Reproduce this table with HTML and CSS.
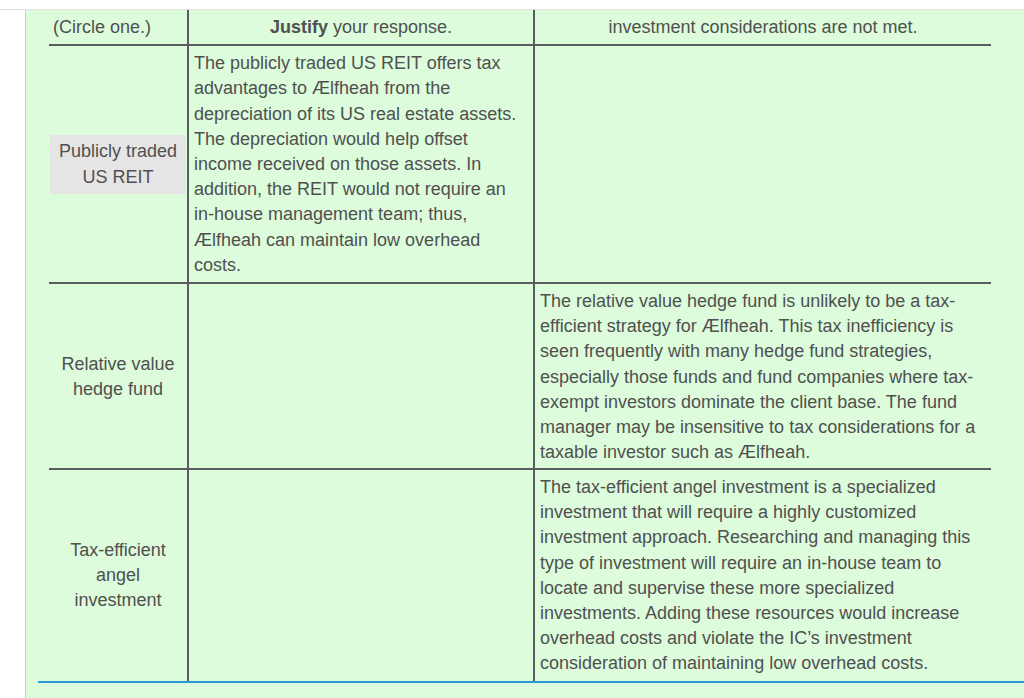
FILE: index.html
```html
<!DOCTYPE html>
<html lang="en">
<head>
<meta charset="utf-8">
<title>Investment selection</title>
<link rel="stylesheet" href="styles.css">
</head>
<body>
<div class="topbar"></div>
<div class="viewport">
  <div class="panel">
    <div class="section">
      <table class="grid">
        <colgroup>
          <col class="c1">
          <col class="c2">
          <col class="c3">
        </colgroup>
        <thead>
          <tr>
            <th class="col-a">(Circle one.)</th>
            <th class="col-b"><strong>Justify</strong> your response.</th>
            <th class="col-c">investment considerations are not met.</th>
          </tr>
        </thead>
        <tbody>
          <tr class="row-1">
            <td class="col-a"><div class="chosen">Publicly traded<br>US REIT</div></td>
            <td class="col-b">The publicly traded US REIT offers tax advantages to Ælfheah from the depreciation of its US real estate assets. The depreciation would help offset income received on those assets. In addition, the REIT would not require an in-house management team; thus, Ælfheah can maintain low overhead costs.</td>
            <td class="col-c"></td>
          </tr>
          <tr class="row-2">
            <td class="col-a">Relative value<br>hedge fund</td>
            <td class="col-b"></td>
            <td class="col-c">The relative value hedge fund is unlikely to be a tax-efficient strategy for Ælfheah. This tax inefficiency is seen frequently with many hedge fund strategies, especially those funds and fund companies where tax-exempt investors dominate the client base. The fund manager may be insensitive to tax considerations for a taxable investor such as Ælfheah.</td>
          </tr>
          <tr class="row-3">
            <td class="col-a">Tax-efficient<br>angel<br>investment</td>
            <td class="col-b"></td>
            <td class="col-c">The tax-efficient angel investment is a specialized investment that will require a highly customized investment approach. Researching and managing this type of investment will require an in-house team to locate and supervise these more specialized investments. Adding these resources would increase overhead costs and violate the IC’s investment consideration of maintaining low overhead costs.</td>
          </tr>
        </tbody>
      </table>
    </div>
  </div>
</div>
</body>
</html>
```

FILE: styles.css
```css
html, body {
  margin: 0;
  padding: 0;
  background: #ffffff;
}

body {
  font-family: "Liberation Sans", Arial, sans-serif;
  font-size: 18px;
  line-height: 25.2px;
  color: #505050;
}

.topbar {
  height: 9px;
  border-bottom: 1px solid #e2e2e2;
  background: #ffffff;
}

.viewport {
  height: 688px;
  overflow: hidden;
}

.panel {
  margin-left: 25px;
  width: 987px;
  border-left: 1px solid #a3e0c6;
  border-right: 1px solid #a3e0c6;
  background: #dcfcdc;
  padding: 0 11px 60px 12px;
  box-sizing: content-box;
}

.section {
  padding: 0 11px;
  border-bottom: 2px solid #2f9ad6;
}

.grid {
  width: 942px;
  table-layout: fixed;
  border-collapse: separate;
  border-spacing: 0;
}

.c1 { width: 140px; }
.c2 { width: 346px; }
.c3 { width: 456px; }

.grid th,
.grid td {
  padding: 5px 5px 4px;
  border-bottom: 2px solid #5a5d5d;
  vertical-align: top;
  text-align: left;
}

.grid th {
  font-weight: normal;
  text-align: center;
  vertical-align: bottom;
  padding-top: 4.5px;
  padding-bottom: 4.5px;
}

.grid th.col-a {
  text-align: left;
  padding-left: 4px;
}

.grid th strong {
  font-weight: bold;
}

.grid .col-a,
.grid .col-b {
  border-right: 2px solid #5a5d5d;
}

.grid td.col-a {
  text-align: center;
  vertical-align: middle;
  padding-left: 1px;
  padding-right: 1px;
}

.row-1 td { padding-bottom: 4px; }
.row-2 td { padding-bottom: 2.5px; }
.row-3 td {
  border-bottom: 0;
  padding-bottom: 4.5px;
}

.chosen {
  background: #e5e5e5;
  padding: 4.5px 0;
}
```
